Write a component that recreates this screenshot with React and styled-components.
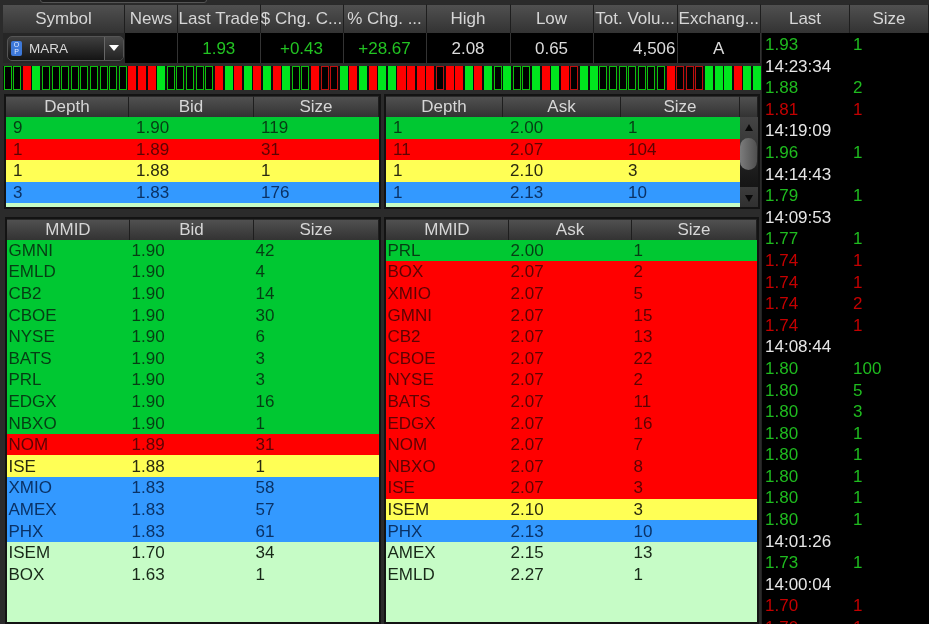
import React from "react";
import styled, { createGlobalStyle } from "styled-components";

const Global = createGlobalStyle`
  html, body { margin: 0; padding: 0; background: #2a2a2a; overflow: hidden; }
  body { font-family: "Liberation Sans", Arial, sans-serif; }
`;

const Screen = styled.div`
  width: 929px;
  height: 624px;
  display: grid;
  grid-template-columns: 761px 168px;
  background: #2b2b2b;
  overflow: hidden;
  font-size: 17px;
  filter: blur(0.3px);
`;

const Main = styled.div`
  display: flex;
  flex-direction: column;
  padding: 4px 0 0 3px;
  position: relative;
`;

const TabEdge = styled.div`
  position: absolute;
  left: 40px;
  top: -3px;
  width: 167px;
  height: 6px;
  border: 1px solid #555;
  border-radius: 4px;
  background: #1d1d1d;
  box-sizing: border-box;
`;

const HeaderRow = styled.div`
  display: grid;
  grid-template-columns: ${(p) => p.$cols};
  height: ${(p) => p.$h || 29}px;
  flex: none;
`;

const HeaderCell = styled.div`
  background: linear-gradient(#505050, #333333);
  border-right: 1px solid #1e1e1e;
  border-top: 1px solid #2a2a2a;
  box-sizing: border-box;
  color: #d6d6d6;
  display: flex;
  align-items: center;
  justify-content: center;
  white-space: nowrap;
  overflow: hidden;
  min-width: 0;
`;

const QuoteRow = styled.div`
  display: grid;
  grid-template-columns: 122px 53px 82.5px 83px 83px 84px 83px 84px 83.5px;
  height: 30px;
  background: #000;
  flex: none;
`;

const QuoteCell = styled.div`
  border-right: 1px solid #333;
  color: ${(p) => (p.$up ? "#22c322" : "#dcdcdc")};
  display: flex;
  align-items: center;
  justify-content: ${(p) => (p.$right ? "flex-end" : "center")};
  box-sizing: border-box;
  padding-top: 1px;
  padding-right: ${(p) => (p.$right ? "1px" : "0")};
`;

const SymbolCell = styled.div`
  background: #262626;
  display: flex;
  align-items: center;
  padding: 2px 0 2px 4px;
  box-sizing: border-box;
`;

const Combo = styled.div`
  width: 117px;
  height: 25px;
  box-sizing: border-box;
  border: 1px solid #555;
  border-radius: 5px;
  background: linear-gradient(#3f3f3f, #141414);
  display: grid;
  grid-template-columns: 1fr 19px;
  overflow: hidden;
`;

const ComboValue = styled.div`
  display: flex;
  align-items: center;
  gap: 7px;
  padding-left: 3px;
  color: #d8d8d8;
  font-size: 13.5px;
`;

const OptBadge = styled.span`
  width: 11px;
  height: 15px;
  border-radius: 2px;
  background: #3d78d8;
  color: #dce8ff;
  font-size: 7px;
  line-height: 7px;
  display: flex;
  flex-direction: column;
  align-items: center;
  justify-content: center;
`;

const ComboArrow = styled.div`
  border-left: 1px solid #666;
  background: linear-gradient(#4a4a4a, #222);
  display: flex;
  align-items: center;
  justify-content: center;
  &::after {
    content: "";
    border-left: 5.5px solid transparent;
    border-right: 5.5px solid transparent;
    border-top: 6px solid #fff;
  }
`;

const Strip = styled.div`
  display: flex;
  gap: 1.6px;
  height: 24px;
  margin: 3px 0 0;
  padding: 0 0 0 0.5px;
  width: 757px;
  background: #0c0c0c;
  flex: none;
`;

const barColors = { G: "#00e61e", R: "#ff0000", o: "#0cc00c", r: "#c00e0e" };

const Bar = styled.div`
  flex: 1;
  box-sizing: border-box;
  background: ${(p) => (p.$k === "G" || p.$k === "R" ? barColors[p.$k] : "#000")};
  border: 1px solid ${(p) => barColors[p.$k]};
`;

const Tables = styled.div`
  display: grid;
  grid-template-columns: ${(p) => p.$cols};
  column-gap: 7px;
  align-items: start;
  margin: ${(p) => p.$top}px 0 0 ${(p) => p.$left}px;
`;

const TableBox = styled.div`
  background: #101010;
  box-shadow: 0 0 0 2px #131313;
  display: flex;
  flex-direction: column;
  height: ${(p) => p.$h}px;
  overflow: hidden;
`;

const DepthBody = styled.div`
  display: grid;
  grid-template-columns: 1fr 18px;
  flex: 1;
  min-height: 0;
`;

const Rows = styled.div`
  background: #c6fcc6;
  display: flex;
  flex-direction: column;
  min-height: 0;
  flex: ${(p) => (p.$grow ? 1 : "none")};
  height: ${(p) => (p.$grow ? "auto" : "89.5px")};
`;

const tones = {
  green: "#00c832",
  red: "#ff0000",
  yellow: "#ffff55",
  blue: "#3399ff",
  pale: "#c6fcc6",
};

const inkTones = {
  green: "#063d14",
  red: "#5c0303",
  yellow: "#2a2a10",
  blue: "#0a3266",
  pale: "#182818",
};

const Row = styled.div`
  display: grid;
  grid-template-columns: ${(p) => p.$cols};
  height: 21.6px;
  flex: none;
  align-items: center;
  background: ${(p) => tones[p.$tone]};
  color: ${(p) => inkTones[p.$tone]};
  line-height: 21px;
`;

const Cell = styled.div`
  padding-left: ${(p) => p.$pad}px;
  white-space: nowrap;
`;

const Scrollbar = styled.div`
  background: linear-gradient(#444 0, #3a3a3a 24%, #1c1c1c 60%, #151515 78%, #3c3c3c 78%, #303030 100%);
  display: flex;
  flex-direction: column;
  align-items: center;
  justify-content: space-between;
  position: relative;
  padding: 7px 0 5px;
  box-sizing: border-box;
  height: 90px;
`;

const Arrow = styled.span`
  border-left: 4.5px solid transparent;
  border-right: 4.5px solid transparent;
  ${(p) => (p.$up ? "border-bottom" : "border-top")}: 7px solid #080808;
`;

const Thumb = styled.span`
  position: absolute;
  left: 0;
  top: 21px;
  width: 17px;
  height: 32px;
  border-radius: 9px;
  background: linear-gradient(90deg, #7c7c7c, #4f4f4f);
`;

const Ticker = styled.div`
  display: flex;
  flex-direction: column;
  padding-top: 4px;
  min-height: 0;
`;

const TickerList = styled.div`
  background: #000;
  flex: 1;
  min-height: 0;
  overflow: hidden;
  border-left: 1px solid #222;
  padding: 1px 0 0 3px;
`;

const Trade = styled.div`
  display: grid;
  grid-template-columns: 88px 1fr;
  height: 21.6px;
  line-height: 21.6px;
  color: ${(p) => ({ g: "#1fbb1f", r: "#c40000", w: "#e6e6e6" }[p.$c])};
`;

const quoteCols = "122px 53px 82.5px 83px 83px 84px 83px 84px 83.5px";
const headers = ["Symbol", "News", "Last Trade", "$ Chg. C...", "% Chg. ...", "High", "Low", "Tot. Volu...", "Exchang..."];

const barPattern =
  "ooRG" + "ooooooooo" + "RRRG" + "ooooo" + "RGRG" + "RGRG" + "oo" + "Rrr" + "GRGR" + "GG" + "RRRR" + "rRR" + "GRGoG" +
  "oo" + "GRGRr" + "GG" + "ooooooo" + "Rrrr" + "GGG" + "RGG";

const depthBid = [
  ["green", "9", "1.90", "119"],
  ["red", "1", "1.89", "31"],
  ["yellow", "1", "1.88", "1"],
  ["blue", "3", "1.83", "176"],
];
const depthAsk = [
  ["green", "1", "2.00", "1"],
  ["red", "11", "2.07", "104"],
  ["yellow", "1", "2.10", "3"],
  ["blue", "1", "2.13", "10"],
];
const bookBid = [
  ["green", "GMNI", "1.90", "42"],
  ["green", "EMLD", "1.90", "4"],
  ["green", "CB2", "1.90", "14"],
  ["green", "CBOE", "1.90", "30"],
  ["green", "NYSE", "1.90", "6"],
  ["green", "BATS", "1.90", "3"],
  ["green", "PRL", "1.90", "3"],
  ["green", "EDGX", "1.90", "16"],
  ["green", "NBXO", "1.90", "1"],
  ["red", "NOM", "1.89", "31"],
  ["yellow", "ISE", "1.88", "1"],
  ["blue", "XMIO", "1.83", "58"],
  ["blue", "AMEX", "1.83", "57"],
  ["blue", "PHX", "1.83", "61"],
  ["pale", "ISEM", "1.70", "34"],
  ["pale", "BOX", "1.63", "1"],
];
const bookAsk = [
  ["green", "PRL", "2.00", "1"],
  ["red", "BOX", "2.07", "2"],
  ["red", "XMIO", "2.07", "5"],
  ["red", "GMNI", "2.07", "15"],
  ["red", "CB2", "2.07", "13"],
  ["red", "CBOE", "2.07", "22"],
  ["red", "NYSE", "2.07", "2"],
  ["red", "BATS", "2.07", "11"],
  ["red", "EDGX", "2.07", "16"],
  ["red", "NOM", "2.07", "7"],
  ["red", "NBXO", "2.07", "8"],
  ["red", "ISE", "2.07", "3"],
  ["yellow", "ISEM", "2.10", "3"],
  ["blue", "PHX", "2.13", "10"],
  ["pale", "AMEX", "2.15", "13"],
  ["pale", "EMLD", "2.27", "1"],
];

const trades = [
  ["g", "1.93", "1"], ["w", "14:23:34", ""], ["g", "1.88", "2"], ["r", "1.81", "1"], ["w", "14:19:09", ""],
  ["g", "1.96", "1"], ["w", "14:14:43", ""], ["g", "1.79", "1"], ["w", "14:09:53", ""], ["g", "1.77", "1"],
  ["r", "1.74", "1"], ["r", "1.74", "1"], ["r", "1.74", "2"], ["r", "1.74", "1"], ["w", "14:08:44", ""],
  ["g", "1.80", "100"], ["g", "1.80", "5"], ["g", "1.80", "3"], ["g", "1.80", "1"], ["g", "1.80", "1"],
  ["g", "1.80", "1"], ["g", "1.80", "1"], ["g", "1.80", "1"], ["w", "14:01:26", ""], ["g", "1.73", "1"],
  ["w", "14:00:04", ""], ["r", "1.70", "1"], ["r", "1.70", "1"],
];

function DataRows({ rows, cols, pad }) {
  return rows.map(([tone, a, b, c]) => (
    <Row key={a + b + c} $tone={tone} $cols={cols}>
      <Cell $pad={pad}>{a}</Cell>
      <Cell $pad={pad}>{b}</Cell>
      <Cell $pad={pad}>{c}</Cell>
    </Row>
  ));
}

function Heads({ labels, cols, h }) {
  return (
    <HeaderRow $cols={cols} $h={h}>
      {labels.map((l, i) => (
        <HeaderCell key={i}>{l}</HeaderCell>
      ))}
    </HeaderRow>
  );
}

export default function App() {
  const depthBidCols = "123px 125px 125px";
  const depthAskCols = "117px 118px 119px";
  const bookBidCols = "123px 124px 125px";
  const bookAskCols = "123px 123px 125px";
  return (
    <Screen>
      <Global />
      <Main>
        <TabEdge />
        <Heads labels={headers} cols={quoteCols} />
        <QuoteRow>
          <SymbolCell>
            <Combo>
              <ComboValue>
                <OptBadge>
                  <span>O</span>
                  <span>P</span>
                </OptBadge>
                MARA
              </ComboValue>
              <ComboArrow />
            </Combo>
          </SymbolCell>
          <QuoteCell />
          <QuoteCell $up>1.93</QuoteCell>
          <QuoteCell $up>+0.43</QuoteCell>
          <QuoteCell $up>+28.67</QuoteCell>
          <QuoteCell>2.08</QuoteCell>
          <QuoteCell>0.65</QuoteCell>
          <QuoteCell $right>4,506</QuoteCell>
          <QuoteCell>A</QuoteCell>
        </QuoteRow>
        <Strip>
          {barPattern.split("").map((k, i) => (
            <Bar key={i} $k={k} />
          ))}
        </Strip>

        <Tables $top={6} $left={3} $cols="373px 372px">
          <TableBox $h={111}>
            <Heads labels={["Depth", "Bid", "Size"]} cols={depthBidCols} h={21} />
            <Rows>
              <DataRows rows={depthBid} cols={depthBidCols} pad={7} />
            </Rows>
          </TableBox>
          <TableBox $h={111}>
            <Heads labels={["Depth", "Ask", "Size", ""]} cols={`${depthAskCols} 18px`} h={21} />
            <DepthBody>
              <Rows>
                <DataRows rows={depthAsk} cols={depthAskCols} pad={7} />
              </Rows>
              <Scrollbar>
                <Arrow $up />
                <Thumb />
                <Arrow />
              </Scrollbar>
            </DepthBody>
          </TableBox>
        </Tables>

        <Tables $top={12} $left={4} $cols="372px 371px">
          <TableBox $h={403}>
            <Heads labels={["MMID", "Bid", "Size"]} cols={bookBidCols} h={20.5} />
            <Rows $grow>
              <DataRows rows={bookBid} cols={bookBidCols} pad={1.5} />
            </Rows>
          </TableBox>
          <TableBox $h={403}>
            <Heads labels={["MMID", "Ask", "Size"]} cols={bookAskCols} h={20.5} />
            <Rows $grow>
              <DataRows rows={bookAsk} cols={bookAskCols} pad={1.5} />
            </Rows>
          </TableBox>
        </Tables>
      </Main>
      <Ticker>
        <Heads labels={["Last", "Size"]} cols="89px 79px" />
        <TickerList>
          {trades.map(([c, a, b], i) => (
            <Trade key={i} $c={c}>
              <span>{a}</span>
              <span>{b}</span>
            </Trade>
          ))}
        </TickerList>
      </Ticker>
    </Screen>
  );
}
